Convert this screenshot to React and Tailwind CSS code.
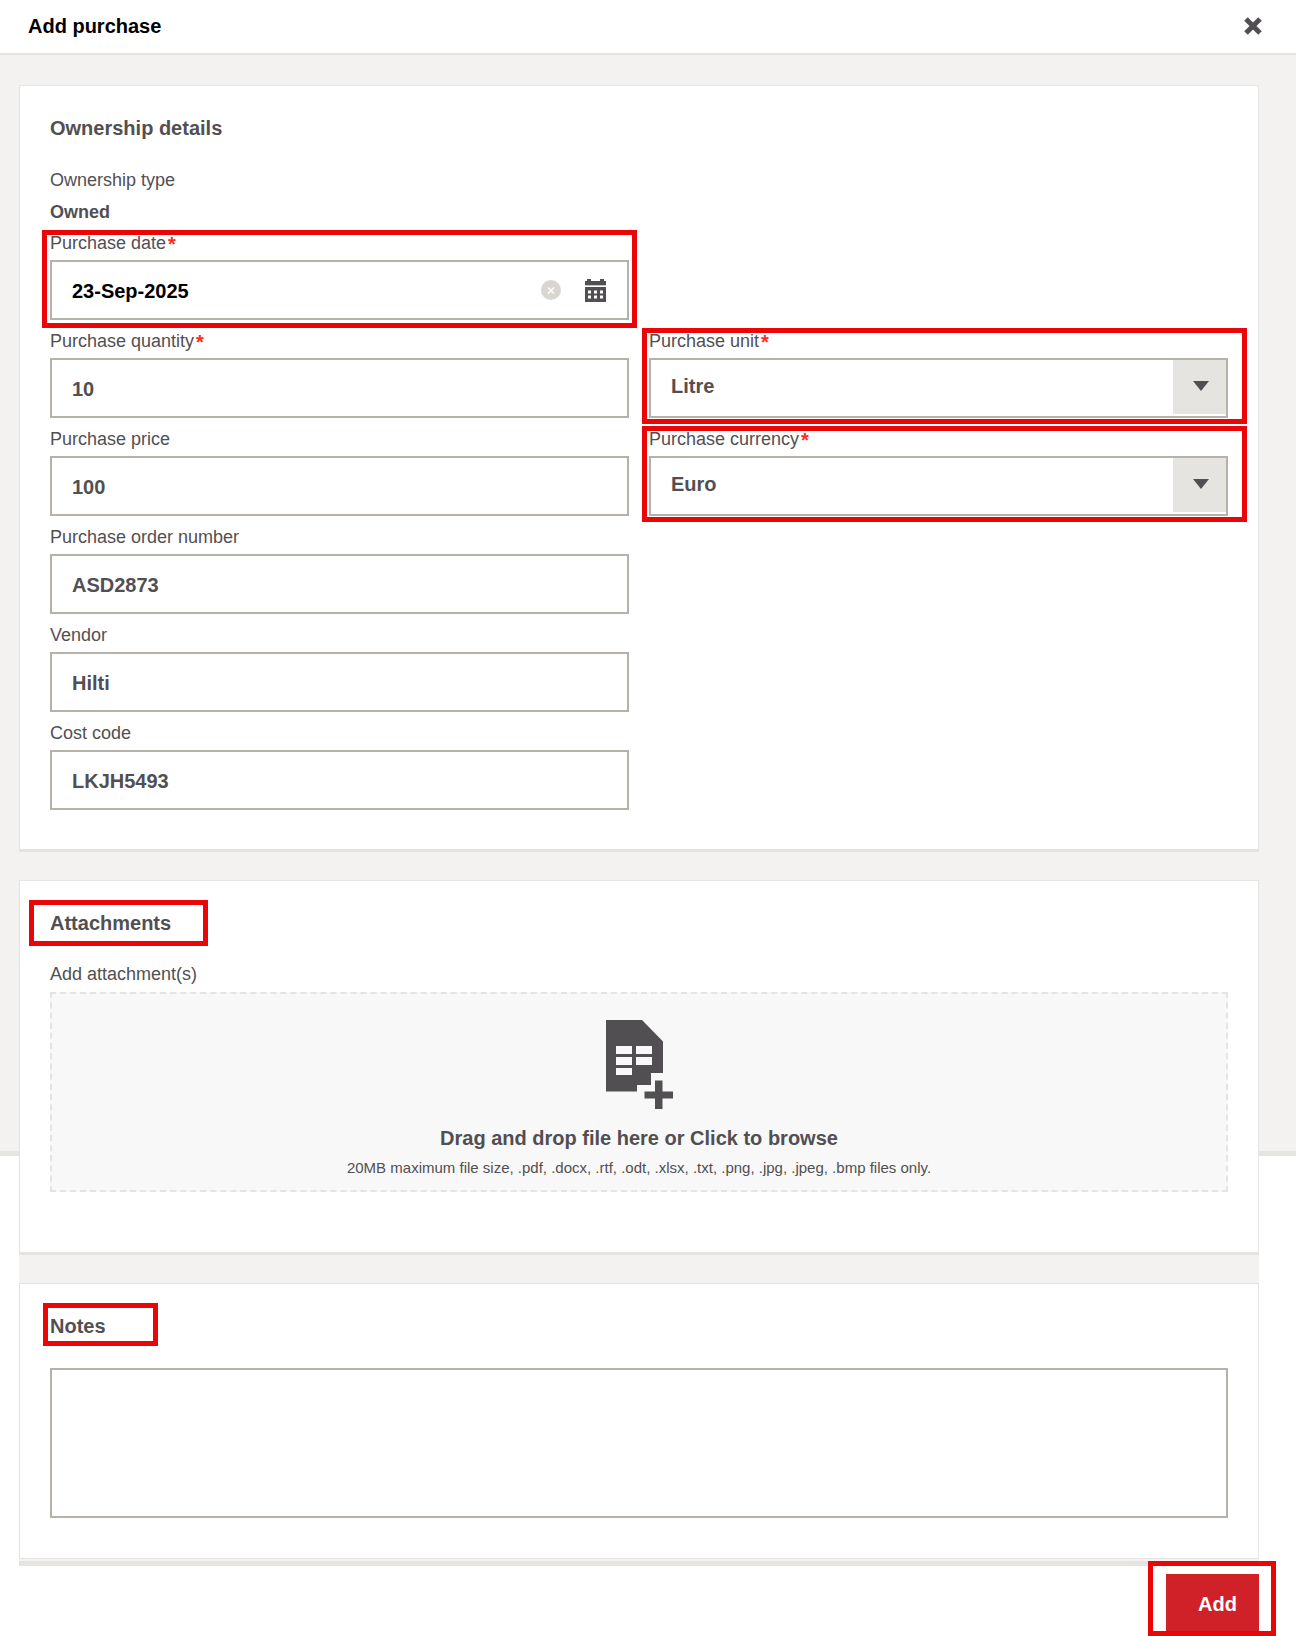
import React, { useState } from "react";

const units = ["Litre", "Kilogram", "Piece"];
const currencies = ["Euro", "US Dollar", "Swiss Franc"];

const CloseIcon = () => (
  <svg width="18" height="18" viewBox="0 0 18 18" stroke="#524f53" strokeWidth="5">
    <path d="M2 2 16 16M16 2 2 16" />
  </svg>
);

const ClearIcon = () => (
  <svg width="20" height="20" viewBox="0 0 20 20">
    <circle cx="10" cy="10" r="10" fill="#d9d6d2" />
    <path d="M7 7.5 13 13.5M13 7.5 7 13.5" stroke="#fff" strokeWidth="1.6" />
  </svg>
);

const CalendarIcon = () => (
  <svg width="21" height="23" viewBox="0 0 21 23">
    <path d="M0 2h2V0h4v2h9V0h4v2h2v4H0z" fill="#524f53" />
    <path d="M0 6h21v1H0z" fill="#c4c8c8" />
    <path
      fillRule="evenodd"
      d="M0 8h21v15H0zM3 11.6v2.8h3v-2.8zM9 11.6v2.8h3v-2.8zM15 11.6v2.8h3v-2.8zM3 16.6v2.8h3v-2.8zM9 16.6v2.8h3v-2.8zM15 16.6v2.8h3v-2.8z"
      fill="#524f53"
    />
  </svg>
);

const FileAddIcon = () => (
  <svg width="67" height="89" viewBox="0 0 67 89" fill="#524f53">
    <path
      fillRule="evenodd"
      d="M0 0h36l21 21.500V53H45v12H31v6.500H0zM10 26v8h16v-8zM30 26v8h16v-8zM10 37v8h16v-8zM30 37v8h16v-8zM10 48v7h16v-7z"
    />
    <path d="M49 60.500h7.500v11H67v7H56.500V89H49V78.500H38.500v-7H49z" />
  </svg>
);

const Required = () => (
  <span className="ml-0.5 inline-block align-middle text-xl leading-none font-bold text-[#ff2a1f]">
    *
  </span>
);

// Red frame drawn over an area, the offsets come from className
const Highlight = ({ className }) => (
  <span
    aria-hidden="true"
    className={`pointer-events-none absolute z-10 border-5 border-[#ea0606] ${className}`}
  />
);

const Field = ({ id, label, required, className = "", children }) => (
  <div className={`relative ${className}`}>
    <label htmlFor={id} className="block h-8 text-lg/[30px]">
      {label}
      {required && <Required />}
    </label>
    {children}
  </div>
);

const TextInput = ({ id, defaultValue }) => (
  <input
    id={id}
    type="text"
    defaultValue={defaultValue}
    className="block h-15 w-full border-2 border-[#b6b1a9] bg-white px-5 pt-0.5 text-xl font-bold outline-none"
  />
);

const Select = ({ id, options }) => (
  <div className="relative border-2 border-[#b6b1a9] bg-white">
    <select
      id={id}
      className="block h-14 w-full appearance-none pr-16 pb-1 pl-5 text-xl font-bold outline-none"
    >
      {options.map((option) => (
        <option key={option}>{option}</option>
      ))}
    </select>
    <span className="pointer-events-none absolute top-0 right-0 flex h-[54px] w-[53px] items-center justify-center bg-[#e5e4e0] pb-0.5 pl-0.5">
      <svg width="16" height="10" viewBox="0 0 16 10" fill="#524f53">
        <path d="M0 0h16L8 10z" />
      </svg>
    </span>
  </div>
);

const App = () => {
  const [date, setDate] = useState("23-Sep-2025");

  return (
    <div className="bg-white font-['Liberation_Sans',Arial,sans-serif] text-[#524f53]">
      {/* Header */}
      <header className="flex h-[55px] items-center justify-between border-b-2 border-[#e5e4e2] pr-[34px] pb-0.5 pl-7">
        <h1 className="text-xl/7 font-bold text-black">Add purchase</h1>
        <button type="button" aria-label="Close">
          <CloseIcon />
        </button>
      </header>

      <form className="grid" onSubmit={(e) => e.preventDefault()}>
        {/* Grey backdrop, the cards run past its lower edge */}
        <div className="col-start-1 row-start-1 h-[1101px] border-b-5 border-[#e5e5e1] bg-[#f3f2f0]" />

        <div className="col-start-1 row-start-1 pt-[30px] pr-[37px] pl-[19px]">
          <div className="flex flex-col gap-7 border-b-5 border-[#e5e4e0] bg-[#f3f2f0] pb-0.5">
            {/* Ownership details */}
            <section className="border border-b-3 border-[#e5e4e2] bg-white px-[30px] pt-7 pb-[39px]">
              <h2 className="mb-[22px] text-xl/7 font-bold">Ownership details</h2>
              <dl className="text-lg/8">
                <dt>Ownership type</dt>
                <dd className="font-bold">Owned</dd>
              </dl>
              <div className="grid grid-cols-2 gap-x-5 gap-y-1.5">
                <Field id="date" label="Purchase date" required>
                  <div className="flex h-15 items-center border-2 border-[#b6b1a9] bg-white pr-[21px] pl-5">
                    <input
                      id="date"
                      type="text"
                      value={date}
                      onChange={(e) => setDate(e.target.value)}
                      className="h-full min-w-0 flex-1 pt-0.5 text-xl font-bold text-black outline-none"
                    />
                    <button type="button" aria-label="Clear date" onClick={() => setDate("")}>
                      <ClearIcon />
                    </button>
                    <button type="button" aria-label="Open calendar" className="ml-6">
                      <CalendarIcon />
                    </button>
                  </div>
                  <Highlight className="top-0.5 -right-2 -bottom-2 -left-2" />
                </Field>
                <Field
                  id="quantity"
                  label="Purchase quantity"
                  required
                  className="col-start-1"
                >
                  <TextInput id="quantity" defaultValue="10" />
                </Field>
                <Field id="unit" label="Purchase unit" required>
                  <Select id="unit" options={units} />
                  <Highlight className="top-0.5 -right-[19px] -bottom-1.5 -left-[7px]" />
                </Field>
                <Field id="price" label="Purchase price">
                  <TextInput id="price" defaultValue="100" />
                </Field>
                <Field id="currency" label="Purchase currency" required>
                  <Select id="currency" options={currencies} />
                  <Highlight className="top-0.5 -right-[19px] -bottom-1.5 -left-[7px]" />
                </Field>
                <Field id="order" label="Purchase order number" className="col-start-1">
                  <TextInput id="order" defaultValue="ASD2873" />
                </Field>
                <Field id="vendor" label="Vendor" className="col-start-1">
                  <TextInput id="vendor" defaultValue="Hilti" />
                </Field>
                <Field id="cost" label="Cost code" className="col-start-1">
                  <TextInput id="cost" defaultValue="LKJH5493" />
                </Field>
              </div>
            </section>

            {/* Attachments */}
            <section className="border border-b-3 border-[#e5e4e2] bg-white px-[30px] pt-7 pb-15">
              <h2 className="relative mb-[22px] w-fit text-xl/7 font-bold">
                Attachments
                <Highlight className="-top-[9px] -right-[37px] -bottom-[9px] -left-[21px]" />
              </h2>
              <label htmlFor="files" className="block h-[33px] text-lg/[30px]">
                Add attachment(s)
              </label>
              <label
                htmlFor="files"
                className="relative flex cursor-pointer flex-col items-center border-2 border-dashed border-[#e5e4e0] bg-[#f8f8f8] pt-[26px] pb-1.5"
              >
                <input id="files" type="file" multiple className="sr-only" />
                <FileAddIcon />
                <span className="mt-[15px] text-xl/7 font-bold">
                  Drag and drop file here or Click to browse
                </span>
                <span className="text-[15px]/8">
                  20MB maximum file size, .pdf, .docx, .rtf, .odt, .xlsx, .txt, .png, .jpg,
                  .jpeg, .bmp files only.
                </span>
              </label>
            </section>

            {/* Notes */}
            <section className="border border-[#e5e4e2] bg-white px-[30px] pt-7 pb-10">
              <h2 className="relative mb-7 w-fit text-xl/7 font-bold">
                <label htmlFor="notes">Notes</label>
                <Highlight className="-top-[9px] -right-[52px] -bottom-1.5 -left-[7px]" />
              </h2>
              <textarea
                id="notes"
                className="block h-[150px] w-full resize-none border-2 border-[#b6b1a9] px-5 py-4 text-xl outline-none"
              />
            </section>
          </div>

          {/* Footer */}
          <div className="flex justify-end pt-2 pb-0.5">
            <div className="relative">
              <button
                type="submit"
                className="block h-15 bg-[#cf2127] pr-[22px] pl-8 text-xl font-bold text-white"
              >
                Add
              </button>
              <Highlight className="-top-[13px] -right-[17px] -bottom-0.5 -left-[18px]" />
            </div>
          </div>
        </div>
      </form>
    </div>
  );
};

export default App;
